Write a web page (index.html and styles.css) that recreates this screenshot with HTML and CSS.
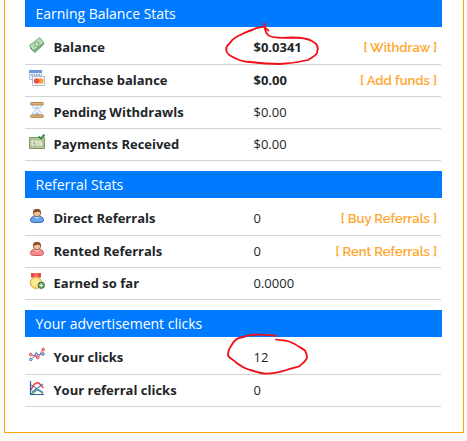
FILE: index.html
```html
<!doctype html>
<html lang="en">
  <head>
    <meta charset="utf-8">
    <title>Account stats</title>
    <link rel="stylesheet" href="styles.css">
  </head>

  <body>
    <main class="panel">

      <section class="stats">
        <h2 class="stats-title">Earning Balance Stats</h2>
        <ul class="stats-list">
          <li>
            <svg class="icon" viewBox="0 0 16 16">
              <path d="M1 11 11 4l4 3-9 8.500z" fill="#84b985" stroke="#5b9a60" stroke-width=".8"/>
              <path d="M.5 8.500 10.500.7l4.500 5L4 14z" fill="#a9d3a5" stroke="#609d64" stroke-width=".8"/>
              <path d="M2.500 9 10.300 2.800l2.600 3L4.500 12z" fill="none" stroke="#d3ead0" stroke-width=".7"/>
              <ellipse cx="7.800" cy="7.300" rx="2" ry="1.900" fill="#d7eed2" stroke="#5f9e62" stroke-width=".8"/>
            </svg>
            <span class="label">Balance</span>
            <span class="value strong">$0.0341</span>
            <a class="action" href="#">[ Withdraw ]</a>
          </li>
          <li>
            <svg class="icon" viewBox="0 0 16 16">
              <path d="M.5.500h12v9H.5z" fill="#e9f1fa" stroke="#b5cbe3"/>
              <path d="M0 0h13v3H0z" fill="#6c9bd6"/>
              <path d="M2 4l1 2 1-2M5.500 4v2M8.500 4.200H7.200L8.300 6H7M9.500 6l.8-2 .8 2" fill="none" stroke="#6d97c5" stroke-width=".8"/>
              <path d="M3.500 6.500h12v9h-12z" fill="#fafafa" stroke="#b8b8b8"/>
              <circle cx="11.700" cy="11" r="2.800" fill="#f5a33a"/>
              <circle cx="7.600" cy="11" r="2.800" fill="#e9504b"/>
            </svg>
            <span class="label">Purchase balance</span>
            <span class="value strong">$0.00</span>
            <a class="action" href="#">[ Add funds ]</a>
          </li>
          <li>
            <svg class="icon" viewBox="0 0 16 16">
              <path d="M3 2.500h10c0 3-2 4-3.500 5.500C11 9.500 13 11 13 13.500H3C3 11 5 9.500 6.500 8 5 6.500 3 5.500 3 2.500z" fill="#edf5fc" stroke="#a3b8d2" stroke-width=".8"/>
              <path d="M5.500 5h5L8 7.500zM4.500 13L8 10l3.500 3z" fill="#a7c7e7"/>
              <rect x="1.500" y=".5" width="13" height="2.500" rx="1" fill="#dfb27a" stroke="#a87645" stroke-width=".8"/>
              <rect x="1.500" y="13" width="13" height="2.500" rx="1" fill="#dfb27a" stroke="#a87645" stroke-width=".8"/>
            </svg>
            <span class="label">Pending Withdrawls</span>
            <span class="value">$0.00</span>
          </li>
          <li>
            <svg class="icon" viewBox="0 0 16 16">
              <path d="M.5 3.500h15v11H.5z" fill="#b4c597" stroke="#819865"/>
              <path d="M5.500 7H3v4h2.500M9 7H7v2h2v2H6.500M12.500 7h-2v2h2v2H10" fill="none" stroke="#f3f8e8"/>
              <path d="M9.500 2.500 12 4.500 15.500.5" fill="none" stroke="#3b9348" stroke-width="2"/>
            </svg>
            <span class="label">Payments Received</span>
            <span class="value">$0.00</span>
          </li>
        </ul>
      </section>

      <section class="stats">
        <h2 class="stats-title">Referral Stats</h2>
        <ul class="stats-list">
          <li>
            <svg class="icon" viewBox="0 0 16 16">
              <path d="M1.500 12C2 9 4 8.500 6 8h4c2 .5 4 1 4.500 4 .3 2-1.500 2.500-6.500 2.500S1.200 14 1.500 12z" fill="#65a5ed" stroke="#2e61aa"/>
              <path d="M5 8.500 8 11l3-2.500z" fill="#b8daf9"/>
              <circle cx="8" cy="5" r="3.700" fill="#f0c49d" stroke="#885130" stroke-width=".8"/>
              <path d="M4 5C3.700 2.500 5.500.9 8 .9s4.300 1.600 4 4.100C11 4.500 10 3.800 9 3.800S5.500 4.500 4 5z" fill="#8b4d27"/>
            </svg>
            <span class="label">Direct Referrals</span>
            <span class="value">0</span>
            <a class="action" href="#">[ Buy Referrals ]</a>
          </li>
          <li>
            <svg class="icon" viewBox="0 0 16 16">
              <path d="M1.500 12C2 9 4 8.500 6 8h4c2 .5 4 1 4.500 4 .3 2-1.500 2.500-6.500 2.500S1.200 14 1.500 12z" fill="#f58c8c" stroke="#c94e4e"/>
              <path d="M5 8.500 8 11l3-2.500z" fill="#fbc5be"/>
              <circle cx="8" cy="5" r="3.700" fill="#f0c49d" stroke="#885130" stroke-width=".8"/>
              <path d="M4 5C3.700 2.500 5.500.9 8 .9s4.300 1.600 4 4.100C11 4.500 10 3.800 9 3.800S5.500 4.500 4 5z" fill="#8b4d27"/>
            </svg>
            <span class="label">Rented Referrals</span>
            <span class="value">0</span>
            <a class="action" href="#">[ Rent Referrals ]</a>
          </li>
          <li>
            <svg class="icon" viewBox="0 0 16 16">
              <path d="M2 0h10v4.500H2z" fill="#ee4545"/>
              <path d="M5 0h4v4H5z" fill="#fa7171"/>
              <circle cx="7" cy="9.700" r="5.700" fill="#fbdf75" stroke="#dca638"/>
              <circle cx="6.500" cy="9" r="3.500" fill="#fce99a"/>
              <circle cx="12.300" cy="12.300" r="3.200" fill="#4f9448" stroke="#2e7133" stroke-width=".8"/>
              <path d="M10.300 12.300h4M12.300 10.300v4" stroke="#fff" stroke-width="1.200"/>
            </svg>
            <span class="label">Earned so far</span>
            <span class="value">0.0000</span>
          </li>
        </ul>
      </section>

      <section class="stats">
        <h2 class="stats-title">Your advertisement clicks</h2>
        <ul class="stats-list">
          <li>
            <svg class="icon" viewBox="0 0 16 16">
              <g fill="none" stroke="#4f80c2">
                <path d="M2 12.500 7.500 7l3 1L14 7"/>
                <g fill="#b7d4f4"><circle cx="1.800" cy="12.500" r="1.300"/><circle cx="7.300" cy="7" r="1.300"/><circle cx="14" cy="7" r="1.300"/></g>
              </g>
              <g fill="none" stroke="#dc3e43">
                <path d="M2 7.500l7 3 5-8"/>
                <g fill="#ffb0ad"><circle cx="1.800" cy="7.500" r="1.300"/><circle cx="8.800" cy="10.500" r="1.300"/><circle cx="14.200" cy="2.500" r="1.300"/></g>
              </g>
            </svg>
            <span class="label">Your clicks</span>
            <span class="value">12</span>
          </li>
          <li>
            <svg class="icon" viewBox="0 0 16 16">
              <path d="M2 14C6 13 7 9.500 9 9.500s3 3 5 4" fill="none" stroke="#59a35b" stroke-width="1.500"/>
              <path d="M2 5c4 0 6 7 12 7M3 12l11-8" fill="none" stroke="#4179bd" stroke-width="1.100"/>
              <path d="M2 10C4 5 6 2.500 9 2.800c2 .5 3 3 5.500 5" fill="none" stroke="#df4144" stroke-width="1.500"/>
              <path d="M1.500 1v13.500H15" fill="none" stroke="#2d61a2" stroke-width="1.200"/>
            </svg>
            <span class="label">Your referral clicks</span>
            <span class="value">0</span>
          </li>
        </ul>
      </section>

      <!-- hand-drawn marks over the values -->
      <svg class="marks" viewBox="0 0 467 441">
        <path d="M264.500 23.500C264.500 28 265 32 268 35c3 3.500 15 3 24 2.500 9 0 15 .5 20 3.500 5 2.500 7 7 5 12-1 3-5 4-9 7-8 2-18 3.500-28 4-11 0-22-1-30-2-8 0-14-3-19-6-6-3-6-9-2-12 2-3 5-6 9-8 5-2 9-5 14-6 5-3 9-3 12-3.300l4.500 4"/>
        <path d="M276 335.800c-9-1-18-1.500-26-.8-4 1-7 2.500-9 2.500-5 1-7 3-9 7-2 3-4 5-4 10 0 4 5 4 8 8 4 3 8 6 14 7.500 5 1 7 3 14 3.500 8 1 14-1 21-3 5-2 10-3 14-4 3-3 7-5 8-9 0-2-1-5-2-7-5-3-10-7-16-9-5-2-9-1-13-2"/>
      </svg>
    </main>
  </body>
</html>
```

FILE: styles.css
```css
* {
  box-sizing: border-box;
}
body {
  margin: 0;
  background-color: #f8f9fa;
  color: #212529;
  font-family: "Open Sans", sans-serif;
  font-size: 13px;
}
.panel {
  height: 433px;
  margin: 0 3px 0 4px;
  padding: 0 21px 0 20px;
  border: 1px solid #ffa500;
  border-top: 0;
  background-color: #fff;
}
.stats {
  margin-bottom: 10px;
}
.stats-title {
  height: 27px;
  margin: 0;
  padding-left: 10.5px;
  background-color: #007bff;
  color: #fff;
  font-size: 14px;
  font-weight: 400;
  line-height: 28px;
}
.stats-list {
  margin: 0 1px 0 0;
  padding: 0;
  list-style-type: none;
}
.stats-list li {
  display: flex;
  align-items: center;
  height: 32px;
  padding: 0 4px 2px 4px;
  border-bottom: 1px solid #d4d4d4;
}
.stats-list li:first-child {
  height: 38px;
  padding-top: 4px;
}
.icon {
  width: 16px;
  height: 16px;
  margin: 0 8.5px 3px 0;
}
.label {
  width: 200px;
  font-weight: 700;
}
.value {
  flex: 1;
}
.strong {
  font-weight: 700;
}
.action {
  padding-top: 1px;
  color: #ffa62b;
  font-family: Raleway, Lato, sans-serif;
  font-size: 13px;
  font-weight: 600;
  text-decoration: none;
}
.marks {
  position: absolute;
  top: 0;
  left: 0;
  width: 467px;
  height: 441px;
  fill: none;
  stroke: #f00d16;
  stroke-width: 1.8;
  stroke-linecap: round;
  pointer-events: none;
}
```
